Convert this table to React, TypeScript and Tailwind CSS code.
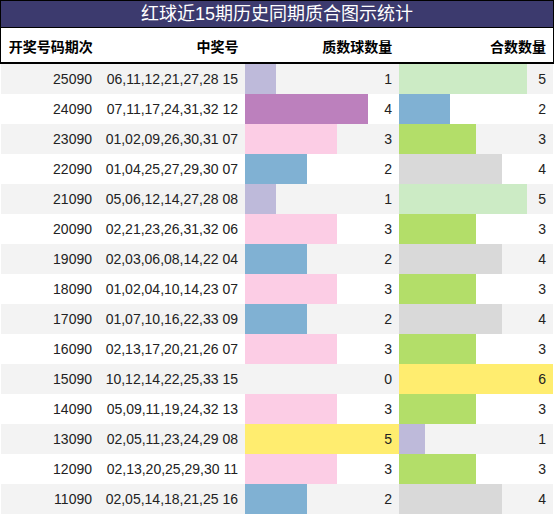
const rows: [string, string, number, number][] = [
  ["25090", "06,11,12,21,27,28 15", 1, 5],
  ["24090", "07,11,17,24,31,32 12", 4, 2],
  ["23090", "01,02,09,26,30,31 07", 3, 3],
  ["22090", "01,04,25,27,29,30 07", 2, 4],
  ["21090", "05,06,12,14,27,28 08", 1, 5],
  ["20090", "02,21,23,26,31,32 06", 3, 3],
  ["19090", "02,03,06,08,14,22 04", 2, 4],
  ["18090", "01,02,04,10,14,23 07", 3, 3],
  ["17090", "01,07,10,16,22,33 09", 2, 4],
  ["16090", "02,13,17,20,21,26 07", 3, 3],
  ["15090", "10,12,14,22,25,33 15", 0, 6],
  ["14090", "05,09,11,19,24,32 13", 3, 3],
  ["13090", "02,05,11,23,24,29 08", 5, 1],
  ["12090", "02,13,20,25,29,30 11", 3, 3],
  ["11090", "02,05,14,18,21,25 16", 2, 4],
];

const primeColors: Record<number, string> = {
  1: "bg-[#bebada]",
  2: "bg-[#80b1d3]",
  3: "bg-[#fccde5]",
  4: "bg-[#bc80bd]",
  5: "bg-[#ffed6f]",
};

const compColors: Record<number, string> = {
  1: "bg-[#bebada]",
  2: "bg-[#80b1d3]",
  3: "bg-[#b3de69]",
  4: "bg-[#d9d9d9]",
  5: "bg-[#ccebc5]",
  6: "bg-[#ffed6f]",
};

const BarCell = ({ value, max, color }: { value: number; max: number; color?: string }) => (
  <div className="relative w-[154px] h-full">
    {value > 0 && (
      <div className={`absolute left-0 top-0 h-full ${color}`} style={{ width: `${(value / max) * 100}%` }} />
    )}
    <div className="relative h-full flex items-center justify-end pr-[7px]">{value}</div>
  </div>
);

export default function App() {
  return (
    <div
      className="w-[554px] bg-white text-[14px] text-[#222]"
      style={{ fontFamily: '"Liberation Sans", "Noto Sans CJK SC", sans-serif' }}
    >
      <div className="h-[28px] border border-black bg-[#3c3a6e] text-white text-[18px] flex items-center justify-center leading-none">
        红球近15期历史同期质合图示统计
      </div>
      <div className="h-[36px] border-x border-black border-b-2 border-b-black flex items-center pt-[5px] font-bold text-black">
        <div className="w-[98px] text-right pr-[6px]">开奖号码期次</div>
        <div className="w-[147px] text-right pr-[7px]">中奖号</div>
        <div className="w-[154px] text-right pr-[7px]">质数球数量</div>
        <div className="w-[154px] text-right pr-[7px]">合数数量</div>
      </div>
      {rows.map(([issue, nums, p, c], i) => (
        <div
          key={issue}
          className={`h-[30px] flex border-x border-white ${i % 2 === 0 ? "bg-[#f3f3f3]" : "bg-white"}`}
        >
          <div className="w-[97px] flex items-center justify-end pr-[6px]">{issue}</div>
          <div className="w-[147px] flex items-center justify-end pr-[7px]">{nums}</div>
          <BarCell value={p} max={5} color={primeColors[p]} />
          <BarCell value={c} max={6} color={compColors[c]} />
        </div>
      ))}
    </div>
  );
}
